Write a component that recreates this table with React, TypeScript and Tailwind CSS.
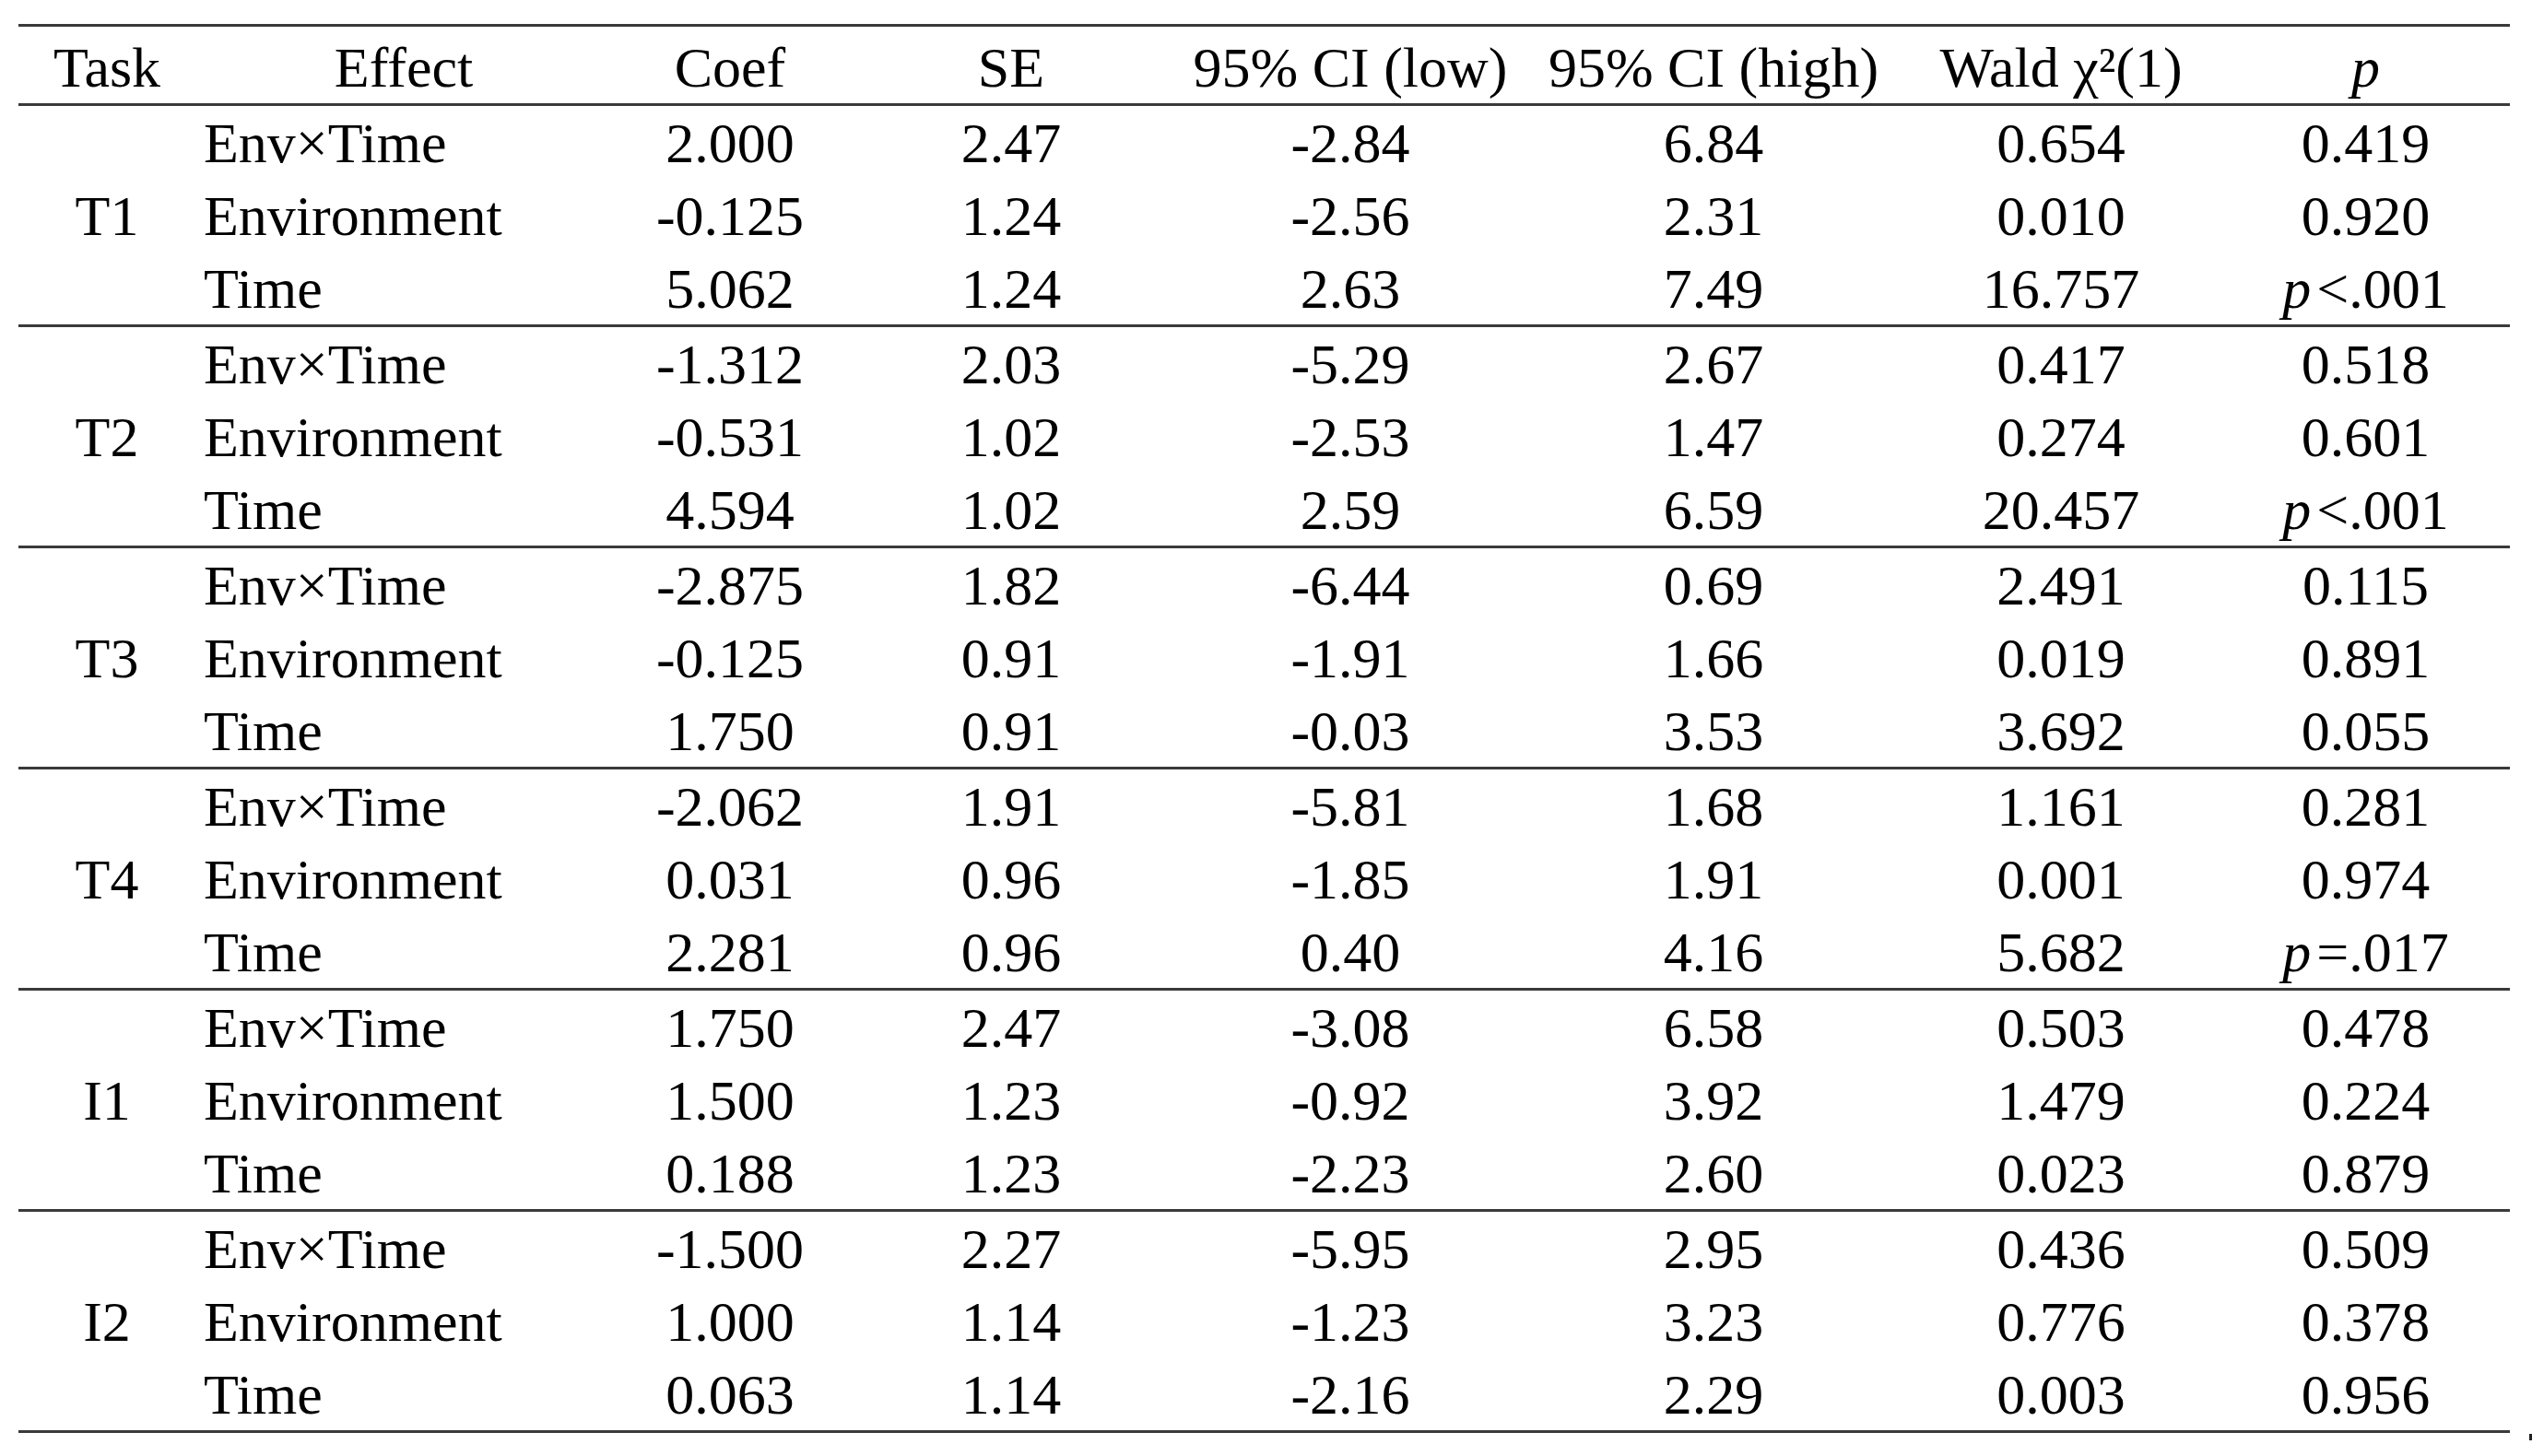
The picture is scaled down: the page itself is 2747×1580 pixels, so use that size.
import React from "react";

type Row = { effect: string; coef: string; se: string; lo: string; hi: string; wald: string; p: React.ReactNode };

const P = ({ op, v }: { op: string; v: string }) => (
  <span>
    <i>p</i>
    <span className="ml-[6px]">{op}</span>
    {v}
  </span>
);

const groups: { task: string; rows: Row[] }[] = [
  {
    task: "T1",
    rows: [
      { effect: "Env×Time", coef: "2.000", se: "2.47", lo: "-2.84", hi: "6.84", wald: "0.654", p: "0.419" },
      { effect: "Environment", coef: "-0.125", se: "1.24", lo: "-2.56", hi: "2.31", wald: "0.010", p: "0.920" },
      { effect: "Time", coef: "5.062", se: "1.24", lo: "2.63", hi: "7.49", wald: "16.757", p: <P op="<" v=".001" /> },
    ],
  },
  {
    task: "T2",
    rows: [
      { effect: "Env×Time", coef: "-1.312", se: "2.03", lo: "-5.29", hi: "2.67", wald: "0.417", p: "0.518" },
      { effect: "Environment", coef: "-0.531", se: "1.02", lo: "-2.53", hi: "1.47", wald: "0.274", p: "0.601" },
      { effect: "Time", coef: "4.594", se: "1.02", lo: "2.59", hi: "6.59", wald: "20.457", p: <P op="<" v=".001" /> },
    ],
  },
  {
    task: "T3",
    rows: [
      { effect: "Env×Time", coef: "-2.875", se: "1.82", lo: "-6.44", hi: "0.69", wald: "2.491", p: "0.115" },
      { effect: "Environment", coef: "-0.125", se: "0.91", lo: "-1.91", hi: "1.66", wald: "0.019", p: "0.891" },
      { effect: "Time", coef: "1.750", se: "0.91", lo: "-0.03", hi: "3.53", wald: "3.692", p: "0.055" },
    ],
  },
  {
    task: "T4",
    rows: [
      { effect: "Env×Time", coef: "-2.062", se: "1.91", lo: "-5.81", hi: "1.68", wald: "1.161", p: "0.281" },
      { effect: "Environment", coef: "0.031", se: "0.96", lo: "-1.85", hi: "1.91", wald: "0.001", p: "0.974" },
      { effect: "Time", coef: "2.281", se: "0.96", lo: "0.40", hi: "4.16", wald: "5.682", p: <P op="=" v=".017" /> },
    ],
  },
  {
    task: "I1",
    rows: [
      { effect: "Env×Time", coef: "1.750", se: "2.47", lo: "-3.08", hi: "6.58", wald: "0.503", p: "0.478" },
      { effect: "Environment", coef: "1.500", se: "1.23", lo: "-0.92", hi: "3.92", wald: "1.479", p: "0.224" },
      { effect: "Time", coef: "0.188", se: "1.23", lo: "-2.23", hi: "2.60", wald: "0.023", p: "0.879" },
    ],
  },
  {
    task: "I2",
    rows: [
      { effect: "Env×Time", coef: "-1.500", se: "2.27", lo: "-5.95", hi: "2.95", wald: "0.436", p: "0.509" },
      { effect: "Environment", coef: "1.000", se: "1.14", lo: "-1.23", hi: "3.23", wald: "0.776", p: "0.378" },
      { effect: "Time", coef: "0.063", se: "1.14", lo: "-2.16", hi: "2.29", wald: "0.003", p: "0.956" },
    ],
  },
];

const cols = "grid grid-cols-[192px_452px_256px_354px_382px_406px_348px_313px]";
const cell = "text-center whitespace-nowrap pt-[2px] leading-[77px]";

export default function App() {
  return (
    <div className="relative w-[2747px] h-[1580px] bg-white text-black text-[62px] font-['Liberation_Serif','Times_New_Roman',serif] overflow-hidden">
      <div className="ml-[20px] mt-[26px] w-[2703px] border-t-[3px] border-[#3a3a3a]">
        <div className={`${cols} h-[86px] pt-[5px] leading-[78px] border-b-[3px] border-[#3a3a3a] whitespace-nowrap`}>
          <div className="text-center">Task</div>
          <div className="text-center">Effect</div>
          <div className="text-center">Coef</div>
          <div className="text-center">SE</div>
          <div className="text-center">95% CI (low)</div>
          <div className="text-center">95% CI (high)</div>
          <div className="text-center">Wald χ²(1)</div>
          <div className="text-center italic">p</div>
        </div>
        {groups.map((g) => (
          <div
            key={g.task}
            className={`${cols} grid-rows-[79px_79px_79px] border-b-[3px] border-[#3a3a3a]`}
          >
            <div className="row-span-3 flex items-center justify-center">
              <span className="pt-[2px] leading-[77px]">{g.task}</span>
            </div>
            {g.rows.map((r, i) => (
              <React.Fragment key={i}>
                <div className="pl-[9px] whitespace-nowrap pt-[2px] leading-[77px]">{r.effect}</div>
                <div className={cell}>{r.coef}</div>
                <div className={cell}>{r.se}</div>
                <div className={cell}>{r.lo}</div>
                <div className={cell}>{r.hi}</div>
                <div className={cell}>{r.wald}</div>
                <div className={cell}>{r.p}</div>
              </React.Fragment>
            ))}
          </div>
        ))}
      </div>
      <div className="absolute left-[2744px] top-[1556px] w-[3px] h-[7px] bg-[#222]" />
    </div>
  );
}
